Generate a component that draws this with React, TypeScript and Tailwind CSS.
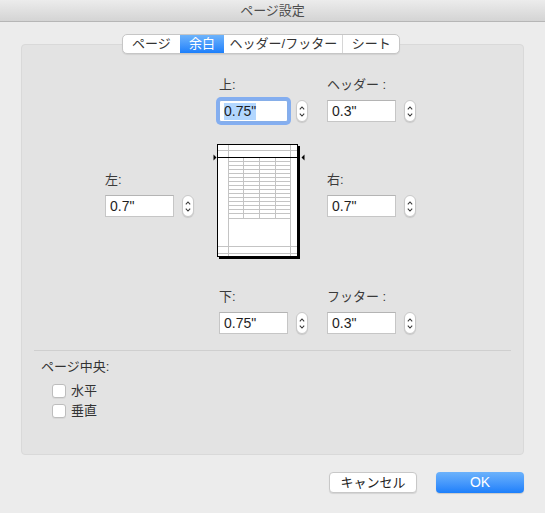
import React from "react";

const font = { fontFamily: '"Liberation Sans", "Noto Sans CJK JP", sans-serif' };

function Stepper() {
  return (
    <div className="ml-[8px] w-[12px] h-[22px] rounded-full bg-white border border-[#c9c9c9] shadow-[0_1px_1px_rgba(0,0,0,0.12)] flex flex-col items-center justify-center gap-[3px]">
      <svg width="6" height="4" viewBox="0 0 6 4">
        <path d="M0.8 3.4 L3 1 L5.2 3.4" fill="none" stroke="#3a3a3a" strokeWidth="1.1" />
      </svg>
      <svg width="6" height="4" viewBox="0 0 6 4">
        <path d="M0.8 0.6 L3 3 L5.2 0.6" fill="none" stroke="#3a3a3a" strokeWidth="1.1" />
      </svg>
    </div>
  );
}

function Field({ label, value, focused }: { label: string; value: string; focused?: boolean }) {
  return (
    <div className="flex flex-col">
      <div className="h-[16px] text-[13px] leading-[16px] text-[#3a3a3a]">{label}</div>
      <div className="mt-[7px] flex items-center">
        <div
          className={
            "w-[69px] h-[22px] bg-white border flex items-center pl-[4px] text-[14px] text-[#1e1e1e] " +
            (focused
              ? "border-[#86aee8] ring-[3px] ring-[#84aef0] rounded-[2px]"
              : "border-[#c6c6c6] border-t-[#b4b4b4]")
          }
        >
          <span className={focused ? "bg-[#b3d7ff] leading-[17px]" : "leading-[17px]"}>{value}</span>
        </div>
        <Stepper />
      </div>
    </div>
  );
}

function PagePreview() {
  const rows = Array.from({ length: 14 }, (_, i) => 13.5 + (i + 1) * 4);
  return (
    <svg width="94" height="118" viewBox="0 0 94 118" className="ml-[-7px]">
      <rect x="7" y="2" width="81" height="113" fill="#000" />
      <rect x="5.5" y="0.5" width="80" height="112" fill="#fff" stroke="#000" strokeWidth="1" />
      <g stroke="#c4c4c4" strokeWidth="1">
        <line x1="16.5" y1="1" x2="16.5" y2="112" />
        <line x1="78.5" y1="1" x2="78.5" y2="112" />
        <line x1="6" y1="6.5" x2="85" y2="6.5" />
        <line x1="6" y1="102.5" x2="85" y2="102.5" />
        <line x1="6" y1="109.5" x2="85" y2="109.5" />
        {rows.map((y) => (
          <line key={y} x1="16.5" y1={y} x2="78.5" y2={y} />
        ))}
        <line x1="16.5" y1="74.5" x2="78.5" y2="74.5" />
        <line x1="31.5" y1="14" x2="31.5" y2="74.5" />
        <line x1="47.5" y1="14" x2="47.5" y2="74.5" />
        <line x1="63.5" y1="14" x2="63.5" y2="74.5" />
      </g>
      <line x1="5" y1="13.5" x2="86" y2="13.5" stroke="#000" strokeWidth="1" />
      <polygon points="1.5,10.5 4.5,13.5 1.5,16.5" fill="#000" />
      <polygon points="92.5,10.5 89.5,13.5 92.5,16.5" fill="#000" />
    </svg>
  );
}

const tabs = [
  { name: "ページ", w: "w-[57px]" },
  { name: "余白", w: "w-[45px]", active: true },
  { name: "ヘッダー/フッター", w: "w-[119px]" },
  { name: "シート", w: "w-[57px]" },
];

function Checkbox({ label }: { label: string }) {
  return (
    <div className="flex items-center h-[20px]">
      <div className="w-[14px] h-[14px] bg-white border border-[#bdbdbd] rounded-[3px] shadow-[0_1px_0_rgba(0,0,0,0.05)]" />
      <span className="ml-[5px] text-[13px] text-[#333]">{label}</span>
    </div>
  );
}

export default function App() {
  return (
    <div className="w-[545px] h-[513px] bg-[#ececec] flex flex-col overflow-hidden" style={font}>
      {/* Title bar */}
      <div className="h-[22px] bg-gradient-to-b from-[#ececec] to-[#d4d4d4] border-b border-[#b6b6b6] flex items-center justify-center text-[13px] text-[#4d4d4d]">
        ページ設定
      </div>

      {/* Tabs */}
      <div className="relative z-10 mt-[12px] ml-[122px] flex h-[20px] w-[278px] rounded-[5px] border border-[#c6c6c6] bg-white shadow-[0_1px_1px_rgba(0,0,0,0.08)] overflow-hidden">
        {tabs.map((t, i) => (
          <div
            key={t.name}
            className={
              t.w +
              " flex items-center justify-center text-[13px] " +
              (t.active
                ? "bg-gradient-to-b from-[#6db3fb] to-[#1a7ffb] text-white"
                : "text-[#333]") +
              (i > 0 && !t.active && !tabs[i - 1].active ? " border-l border-[#d6d6d6]" : "")
            }
          >
            {t.name}
          </div>
        ))}
      </div>

      {/* Panel */}
      <div className="-mt-[10px] ml-[21px] w-[503px] h-[411px] bg-[#e3e3e3] border border-[#d9d9d9] rounded-[4px] flex flex-col">
        <div className="pt-[32px] pl-[83px]">
          <div className="flex">
            <div className="w-[114px]" />
            <div className="w-[108px]">
              <Field label="上:" value={'0.75"'} focused />
            </div>
            <Field label="ヘッダー :" value={'0.3"'} />
          </div>

          <div className="flex mt-[22px]">
            <div className="w-[114px] mt-[28px]">
              <Field label="左:" value={'0.7"'} />
            </div>
            <div className="w-[108px]">
              <PagePreview />
            </div>
            <div className="mt-[28px]">
              <Field label="右:" value={'0.7"'} />
            </div>
          </div>

          <div className="flex mt-[27px]">
            <div className="w-[114px]" />
            <div className="w-[108px]">
              <Field label="下:" value={'0.75"'} />
            </div>
            <Field label="フッター :" value={'0.3"'} />
          </div>
        </div>

        <div className="mt-[16px] mx-[12px] border-t border-[#cfcfcf]" />

        <div className="pl-[19px] pt-[8px]">
          <div className="h-[16px] text-[13px] leading-[16px] text-[#333]">ページ中央:</div>
          <div className="ml-[11px] mt-[6px] flex flex-col">
            <Checkbox label="水平" />
            <Checkbox label="垂直" />
          </div>
        </div>
      </div>

      {/* Buttons */}
      <div className="mt-[17px] flex justify-end pr-[21px] gap-[19px]">
        <div className="w-[88px] h-[21px] bg-white border border-[#c8c8c8] rounded-[4px] shadow-[0_1px_1px_rgba(0,0,0,0.1)] flex items-center justify-center text-[13px] text-[#222]">
          キャンセル
        </div>
        <div className="w-[88px] h-[21px] bg-gradient-to-b from-[#6cb2fb] to-[#1b7ffb] rounded-[4px] shadow-[0_1px_1px_rgba(0,0,0,0.15)] flex items-center justify-center text-[14px] text-white">
          OK
        </div>
      </div>
    </div>
  );
}
